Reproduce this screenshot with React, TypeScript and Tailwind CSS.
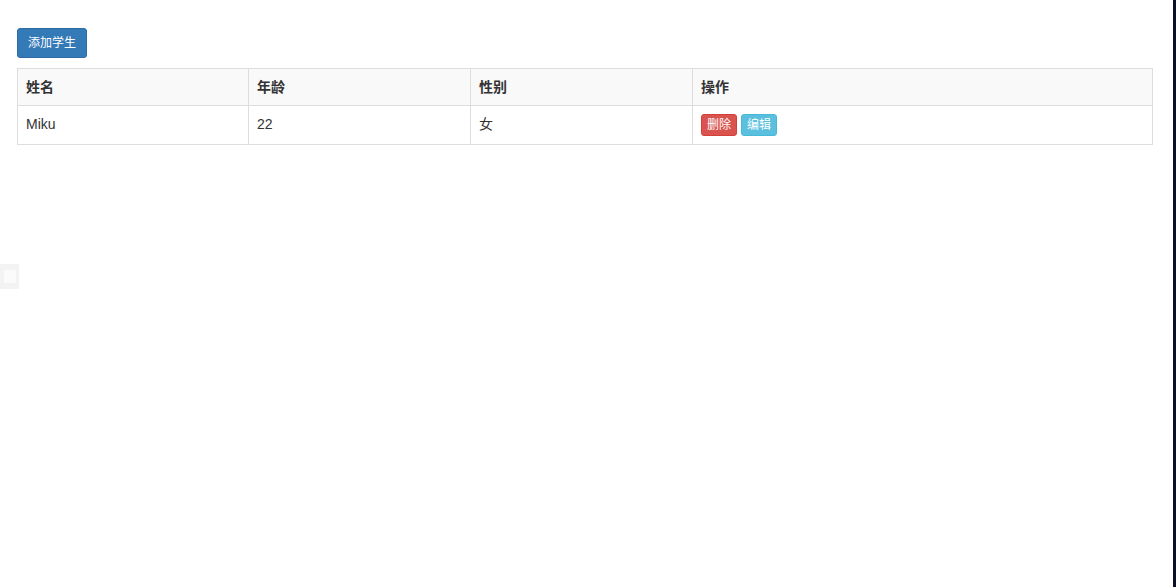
import React from 'react';

const students = [{ name: 'Miku', age: 22, gender: '女' }];

export default function App() {
  return (
    <div
      className="relative flex min-h-[587px] w-full bg-white text-[14px] leading-[20px] text-[#333]"
      style={{ fontFamily: '"Liberation Sans", Arial, "Noto Sans CJK SC", sans-serif' }}
    >
      {/* Main content */}
      <div className="flex-1 pl-[17px] pt-[28px]">
        <button className="h-[30px] rounded-[3px] border border-[#2e6da4] bg-[#337ab7] px-[10px] text-[12px] leading-[18px] text-white">
          添加学生
        </button>

        <table className="mt-[10px] w-[1136px] border-collapse border border-[#ddd]">
          <thead>
            <tr className="bg-[#f9f9f9]">
              <th className="w-[231px] border border-[#ddd] p-[8px] text-left font-bold">姓名</th>
              <th className="w-[222px] border border-[#ddd] p-[8px] text-left font-bold">年龄</th>
              <th className="w-[222px] border border-[#ddd] p-[8px] text-left font-bold">性别</th>
              <th className="border border-[#ddd] p-[8px] text-left font-bold">操作</th>
            </tr>
          </thead>
          <tbody>
            {students.map(s => (
              <tr key={s.name}>
                <td className="border border-[#ddd] p-[8px] align-top">{s.name}</td>
                <td className="border border-[#ddd] p-[8px] align-top">{s.age}</td>
                <td className="border border-[#ddd] p-[8px] align-top">{s.gender}</td>
                <td className="border border-[#ddd] p-[8px] align-top">
                  <div className="flex gap-[4px]">
                    <button className="h-[22px] rounded-[3px] border border-[#d43f3a] bg-[#d9534f] px-[5px] text-[12px] leading-[18px] text-white">
                      删除
                    </button>
                    <button className="h-[22px] rounded-[3px] border border-[#46b8da] bg-[#5bc0de] px-[5px] text-[12px] leading-[18px] text-white">
                      编辑
                    </button>
                  </div>
                </td>
              </tr>
            ))}
          </tbody>
        </table>
      </div>

      {/* Dark window edge on the right */}
      <div className="w-[3px] shrink-0 bg-[#0b1024]" />

      {/* Small floating handle on the left */}
      <div className="absolute left-0 top-[264px] flex h-[25px] w-[19px] items-center justify-center bg-[#f3f3f3]">
        <div className="h-[13px] w-[12px] bg-[#fbfbfb]" />
      </div>
    </div>
  );
}
